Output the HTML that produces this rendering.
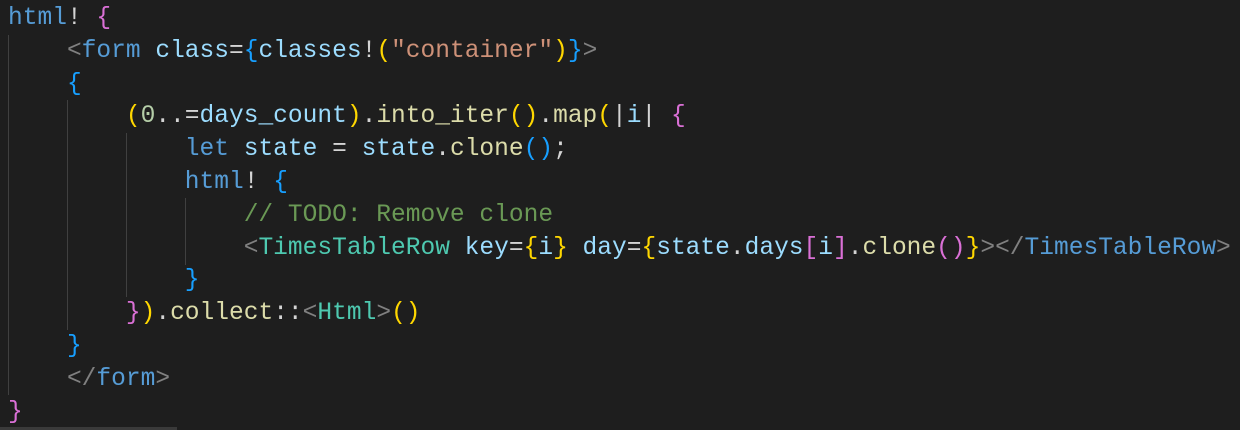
<!DOCTYPE html>
<html><head><style>
html,body{margin:0;padding:0;background:#1e1e1e;width:1240px;height:430px;overflow:hidden;}
.code{position:absolute;left:8px;top:3px;font-family:"Liberation Mono",monospace;font-size:24.55px;line-height:32.8px;color:#d4d4d4;white-space:pre;}
.g{position:absolute;width:1px;background:#404040;}
.k{color:#569cd6}.v{color:#9cdcfe}.f{color:#dcdcaa}.s{color:#ce9178}.n{color:#b5cea8}.c{color:#6a9955}.t{color:#4ec9b0}.p{color:#808080}
.b1{color:#da70d6}.b2{color:#179fff}.b3{color:#ffd700}
</style></head><body>
<div class="g" style="left:8px;top:35px;height:360px"></div>
<div class="g" style="left:67px;top:100px;height:230px"></div>
<div class="g" style="left:126px;top:133px;height:164px"></div>
<div class="g" style="left:185px;top:198px;height:67px"></div>
<div style="position:absolute;left:0;top:427px;width:177px;height:3px;background:#3a3a3a"></div>
<div class="code"><span class="k">html</span>! <span class="b1">{</span>
    <span class="p">&lt;</span><span class="k">form</span> <span class="v">class</span>=<span class="b2">{</span><span class="v">classes</span>!<span class="b3">(</span><span class="s">"container"</span><span class="b3">)</span><span class="b2">}</span><span class="p">&gt;</span>
    <span class="b2">{</span>
        <span class="b3">(</span><span class="n">0</span>..=<span class="v">days_count</span><span class="b3">)</span>.<span class="f">into_iter</span><span class="b3">()</span>.<span class="f">map</span><span class="b3">(</span>|<span class="v">i</span>| <span class="b1">{</span>
            <span class="k">let</span> <span class="v">state</span> = <span class="v">state</span>.<span class="f">clone</span><span class="b2">()</span>;
            <span class="k">html</span>! <span class="b2">{</span>
                <span class="c">// TODO: Remove clone</span>
                <span class="p">&lt;</span><span class="t">TimesTableRow</span> <span class="v">key</span>=<span class="b3">{</span><span class="v">i</span><span class="b3">}</span> <span class="v">day</span>=<span class="b3">{</span><span class="v">state</span>.<span class="v">days</span><span class="b1">[</span><span class="v">i</span><span class="b1">]</span>.<span class="f">clone</span><span class="b1">()</span><span class="b3">}</span><span class="p">&gt;&lt;/</span><span class="k">TimesTableRow</span><span class="p">&gt;</span>
            <span class="b2">}</span>
        <span class="b1">}</span><span class="b3">)</span>.<span class="f">collect</span>::<span class="p">&lt;</span><span class="t">Html</span><span class="p">&gt;</span><span class="b3">()</span>
    <span class="b2">}</span>
    <span class="p">&lt;/</span><span class="k">form</span><span class="p">&gt;</span>
<span class="b1">}</span></div>
</body></html>
